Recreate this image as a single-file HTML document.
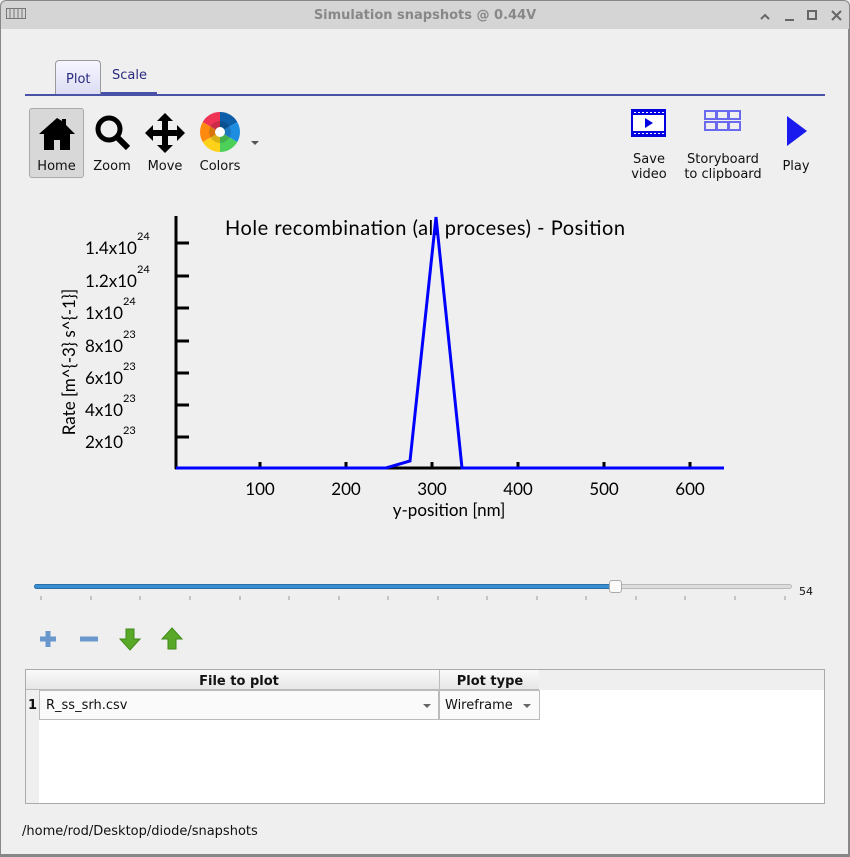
<!DOCTYPE html>
<html><head><style>
*{box-sizing:border-box;margin:0;padding:0}
body{width:850px;height:857px;background:#efefef;font-family:"DejaVu Sans","Liberation Sans",sans-serif;font-size:13px;color:#111;position:relative;overflow:hidden}
.abs{position:absolute}
.tb{left:0;top:0;width:850px;height:29px;background:#d5d5d5;border-radius:6px 6px 0 0;border:1px solid #888;border-bottom:none}
.title{left:0;width:850px;top:8px;text-align:center;font-weight:bold;color:#888;font-size:13px}
.lbl{font-size:13px;text-align:center;line-height:15px}
</style></head><body>
<div class="abs tb"></div>
<div class="abs title">Simulation snapshots @ 0.44V</div>
<svg class="abs" style="left:6px;top:8px" width="20" height="12"><g stroke="#777" fill="none"><rect x="0.5" y="0.5" width="19" height="10"/><path d="M4 1v10M8 1v10M12 1v10M16 1v10"/></g></svg>
<svg class="abs" style="left:755px;top:8px" width="90" height="16"><g stroke="#666" stroke-width="2" fill="none"><path d="M6 11l4-4 4 4"/><path d="M30 12h9"/><rect x="53" y="3" width="8" height="8"/><path d="M77 3l9 9M86 3l-9 9"/></g></svg>
<div class="abs" style="left:848px;top:29px;width:2px;height:828px;background:#888"></div>
<div class="abs" style="left:0;top:29px;width:1px;height:828px;background:#888"></div>
<div class="abs" style="left:0;top:854px;width:850px;height:3px;background:#888"></div>

<!-- tabs -->
<div class="abs" style="left:55px;top:60px;width:46px;height:35px;border:1px solid #999;border-bottom:none;border-radius:4px 4px 0 0;background:linear-gradient(#f6f6ff,#dcdcf4)"></div>
<div class="abs" style="left:66px;top:72px;color:#2a2a80">Plot</div>
<div class="abs" style="left:112px;top:68px;color:#2a2a80">Scale</div>
<div class="abs" style="left:101px;top:92px;width:56px;height:2px;background:#4a52a8"></div>
<div class="abs" style="left:25px;top:94px;width:800px;height:2px;background:#4a52a8"></div>

<!-- toolbar -->
<div class="abs" style="left:29px;top:108px;width:55px;height:70px;background:#d8d8d8;border:1px solid #aaa;border-radius:3px"></div>
<svg class="abs" style="left:37px;top:114px" width="40" height="40" viewBox="0 0 40 40"><path d="M20 4L2 20h5v16h10V26h6v10h10V20h5L29 11V5h-4v2z" fill="#000"/></svg>
<div class="abs lbl" style="left:29px;top:159px;width:55px">Home</div>
<svg class="abs" style="left:92px;top:113px" width="40" height="40"><circle cx="17" cy="16" r="11" fill="none" stroke="#000" stroke-width="5"/><path d="M25 24l11 11" stroke="#000" stroke-width="6"/></svg>
<div class="abs lbl" style="left:88px;top:159px;width:48px">Zoom</div>
<svg class="abs" style="left:144px;top:112px" width="42" height="42" viewBox="0 0 42 42"><path d="M21 1l8 8h-5v9h9v-5l8 8-8 8v-5h-9v9h5l-8 8-8-8h5v-9H9v5l-8-8 8-8v5h9V9h-5z" fill="#000"/></svg>
<div class="abs lbl" style="left:142px;top:159px;width:46px">Move</div>
<svg class="abs" style="left:199px;top:111px" width="42" height="42" viewBox="-21 -21 42 42">
<path d="M0 0L0 -20A20 20 0 0 1 17.3 -10Z" fill="#0c5ea8"/>
<path d="M0 0L17.3 -10A20 20 0 0 1 17.3 10Z" fill="#1e8de0"/>
<path d="M0 0L17.3 10A20 20 0 0 1 0 20Z" fill="#4cd05a"/>
<path d="M0 0L0 20A20 20 0 0 1 -17.3 10Z" fill="#ffd21a"/>
<path d="M0 0L-17.3 10A20 20 0 0 1 -17.3 -10Z" fill="#ff8a10"/>
<path d="M0 0L-17.3 -10A20 20 0 0 1 0 -20Z" fill="#ee3355"/>
<circle r="11" fill="#000" opacity="0.15"/><circle r="5" fill="#fff"/></svg>
<div class="abs" style="left:251px;top:141px;width:0;height:0;border:4px solid transparent;border-top:4px solid #555"></div>
<div class="abs lbl" style="left:195px;top:159px;width:50px">Colors</div>

<svg class="abs" style="left:631px;top:109px" width="36" height="28"><rect x="1" y="1" width="33" height="26" fill="#fff" stroke="#0000e0" stroke-width="2"/><rect x="1" y="1" width="33" height="5" fill="#0000e0"/><rect x="1" y="22" width="33" height="5" fill="#0000e0"/><path d="M3 3.5h30M3 24.5h30" stroke="#fff" stroke-dasharray="2 2"/><path d="M14 9l8 5-8 5z" fill="#0000e0"/></svg>
<div class="abs lbl" style="left:620px;top:152px;width:58px">Save<br>video</div>
<svg class="abs" style="left:703px;top:109px" width="40" height="24"><g fill="none" stroke="#6a6af0" stroke-width="2"><rect x="2" y="2" width="11" height="8"/><rect x="14" y="2" width="11" height="8"/><rect x="26" y="2" width="11" height="8"/><rect x="2" y="13" width="11" height="8"/><rect x="14" y="13" width="11" height="8"/><rect x="26" y="13" width="11" height="8"/></g></svg>
<div class="abs lbl" style="left:678px;top:152px;width:90px">Storyboard<br>to clipboard</div>
<svg class="abs" style="left:785px;top:115px" width="24" height="32"><path d="M2 1l20 15L2 31z" fill="#1a1aee"/></svg>
<div class="abs lbl" style="left:776px;top:159px;width:40px">Play</div>

<!-- plot -->
<svg class="abs" style="left:0;top:195px" width="850" height="340" viewBox="0 195 850 340" font-family="Lato,'Liberation Sans',sans-serif">
<text x="425" y="235" text-anchor="middle" font-size="20" textLength="400" fill="#000">Hole recombination (all proceses) - Position</text>
<path d="M176 216V469M175 468H724" stroke="#000" stroke-width="3" fill="none"/>
<g stroke="#000" stroke-width="3">
<path d="M176 243h13M176 276h13M176 308h13M176 341h13M176 373h13M176 405h13M176 437h13"/>
<path d="M260 462v6M346 462v6M432 462v6M518 462v6M604 462v6M690 462v6"/>
</g>
<g font-size="17" fill="#000" text-anchor="middle">
<text x="260" y="495">100</text><text x="346" y="495">200</text><text x="432" y="495">300</text><text x="518" y="495">400</text><text x="604" y="495">500</text><text x="690" y="495">600</text>
<text x="449" y="516">y-position [nm]</text>
</g>
<g font-size="17" fill="#000">
<text x="85" y="254">1.4x10</text><text x="85" y="287">1.2x10</text><text x="85" y="319">1x10</text><text x="85" y="352">8x10</text><text x="85" y="384">6x10</text><text x="85" y="416">4x10</text><text x="85" y="448">2x10</text>
</g>
<g font-size="11" fill="#000">
<text x="137" y="240">24</text><text x="137" y="273">24</text><text x="123" y="305">24</text><text x="123" y="338">23</text><text x="123" y="370">23</text><text x="123" y="402">23</text><text x="123" y="434">23</text>
</g>
<text transform="translate(75,362) rotate(-90)" font-size="17" text-anchor="middle" fill="#000">Rate [m^{-3} s^{-1}]</text>
<polyline points="176,468 386,468 410,461 436,217 462,468 724,468" fill="none" stroke="#0000ff" stroke-width="3"/>
</svg>

<!-- slider -->
<div class="abs" style="left:34px;top:584px;width:758px;height:5px;background:#ddd;border:1px solid #bbb;border-radius:3px"></div>
<div class="abs" style="left:34px;top:584px;width:582px;height:5px;background:#3a8fd0;border:1px solid #2a6fa8;border-radius:3px"></div>
<div class="abs" style="left:609px;top:580px;width:13px;height:13px;background:#fafafa;border:1px solid #aaa;border-radius:3px"></div>
<div class="abs" style="left:799px;top:585px;font-size:11px">54</div>
<svg class="abs" style="left:0;top:594px" width="850" height="10"><g stroke="#999"><path d="M41 2v4M91 2v4M140 2v4M190 2v4M240 2v4M289 2v4M339 2v4M388 2v4M438 2v4M487 2v4M537 2v4M586 2v4M636 2v4M685 2v4M735 2v4M785 2v4"/></g></svg>

<!-- buttons -->
<svg class="abs" style="left:36px;top:625px" width="150" height="28"><path d="M12 6v16M4 14h16" stroke="#6a98cc" stroke-width="5"/><path d="M44 14h18" stroke="#6a98cc" stroke-width="5"/><path d="M90 4h8v10h6l-10 11-10-11h6z" fill="#5aa828" stroke="#3e8a18"/><path d="M136 3l10 11h-6v10h-8V14h-6z" fill="#5aa828" stroke="#3e8a18"/></svg>

<!-- table -->
<div class="abs" style="left:25px;top:669px;width:800px;height:135px;background:#fff;border:1px solid #aaa"></div>
<div class="abs" style="left:26px;top:670px;width:513px;height:20px;background:linear-gradient(#fafafa,#e6e6e6);border-bottom:1px solid #bbb"></div>
<div class="abs" style="left:539px;top:670px;width:285px;height:20px;background:#efefef"></div>
<div class="abs" style="left:26px;top:690px;width:13px;height:113px;background:#efefef"></div>
<div class="abs" style="left:439px;top:670px;width:1px;height:20px;background:#bbb"></div>
<div class="abs" style="left:39px;top:674px;width:400px;text-align:center;font-weight:bold">File to plot</div>
<div class="abs" style="left:440px;top:674px;width:100px;text-align:center;font-weight:bold">Plot type</div>
<div class="abs" style="left:28px;top:698px;font-weight:bold">1</div>
<div class="abs" style="left:39px;top:690px;width:400px;height:30px;border:1px solid #bbb;background:#fafafa"></div>
<div class="abs" style="left:46px;top:698px">R_ss_srh.csv</div>
<div class="abs" style="left:423px;top:704px;border:4px solid transparent;border-top:4px solid #666"></div>
<div class="abs" style="left:439px;top:690px;width:101px;height:30px;border:1px solid #bbb;background:#fafafa"></div>
<div class="abs" style="left:445px;top:698px">Wireframe</div>
<div class="abs" style="left:523px;top:704px;border:4px solid transparent;border-top:4px solid #666"></div>

<div class="abs" style="left:22px;top:824px">/home/rod/Desktop/diode/snapshots</div>
</body></html>
